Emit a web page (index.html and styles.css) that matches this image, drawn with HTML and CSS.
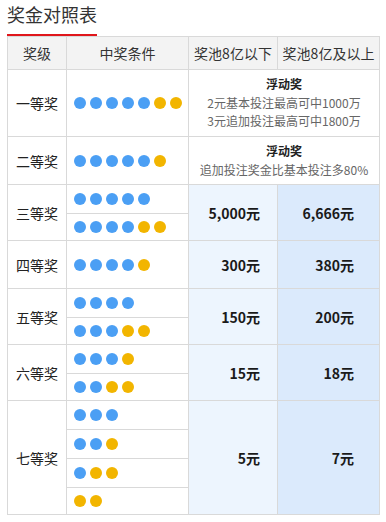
FILE: index.html
```html
<!DOCTYPE html>
<html lang="zh-CN">
<head>
<meta charset="utf-8">
<title>奖金对照表</title>
<link rel="stylesheet" href="styles.css">
</head>
<body>
<div class="wrap">
  <div class="title-bar"><h2 class="title">奖金对照表</h2></div>
  <table class="prize">
    <colgroup><col class="c1"><col class="c2"><col class="c3"><col class="c4"></colgroup>
    <thead>
      <tr><th>奖级</th><th>中奖条件</th><th>奖池8亿以下</th><th>奖池8亿及以上</th></tr>
    </thead>
    <tbody>
      <tr class="r-tall">
        <td class="lvl">一等奖</td>
        <td class="cond"><span class="b"></span><span class="b"></span><span class="b"></span><span class="b"></span><span class="b"></span><span class="y"></span><span class="y"></span></td>
        <td class="float" colspan="2"><strong>浮动奖</strong><br>2元基本投注最高可中1000万<br>3元追加投注最高可中1800万</td>
      </tr>
      <tr class="r-mid">
        <td class="lvl">二等奖</td>
        <td class="cond"><span class="b"></span><span class="b"></span><span class="b"></span><span class="b"></span><span class="b"></span><span class="y"></span></td>
        <td class="float" colspan="2"><strong>浮动奖</strong><br>追加投注奖金比基本投注多80%</td>
      </tr>

      <tr class="r-sub">
        <td class="lvl" rowspan="2">三等奖</td>
        <td class="cond"><span class="b"></span><span class="b"></span><span class="b"></span><span class="b"></span><span class="b"></span></td>
        <td class="amt a1" rowspan="2">5,000元</td>
        <td class="amt a2" rowspan="2">6,666元</td>
      </tr>
      <tr class="r-last">
        <td class="cond"><span class="b"></span><span class="b"></span><span class="b"></span><span class="b"></span><span class="y"></span><span class="y"></span></td>
      </tr>

      <tr class="r-mid">
        <td class="lvl">四等奖</td>
        <td class="cond"><span class="b"></span><span class="b"></span><span class="b"></span><span class="b"></span><span class="y"></span></td>
        <td class="amt a1">300元</td>
        <td class="amt a2">380元</td>
      </tr>

      <tr class="r-sub">
        <td class="lvl" rowspan="2">五等奖</td>
        <td class="cond"><span class="b"></span><span class="b"></span><span class="b"></span><span class="b"></span></td>
        <td class="amt a1" rowspan="2">150元</td>
        <td class="amt a2" rowspan="2">200元</td>
      </tr>
      <tr class="r-last">
        <td class="cond"><span class="b"></span><span class="b"></span><span class="b"></span><span class="y"></span><span class="y"></span></td>
      </tr>

      <tr class="r-sub">
        <td class="lvl" rowspan="2">六等奖</td>
        <td class="cond"><span class="b"></span><span class="b"></span><span class="b"></span><span class="y"></span></td>
        <td class="amt a1" rowspan="2">15元</td>
        <td class="amt a2" rowspan="2">18元</td>
      </tr>
      <tr class="r-last">
        <td class="cond"><span class="b"></span><span class="b"></span><span class="y"></span><span class="y"></span></td>
      </tr>

      <tr class="r-sub">
        <td class="lvl" rowspan="4">七等奖</td>
        <td class="cond"><span class="b"></span><span class="b"></span><span class="b"></span></td>
        <td class="amt a1" rowspan="4">5元</td>
        <td class="amt a2" rowspan="4">7元</td>
      </tr>
      <tr class="r-sub">
        <td class="cond"><span class="b"></span><span class="b"></span><span class="y"></span></td>
      </tr>
      <tr class="r-sub">
        <td class="cond"><span class="b"></span><span class="y"></span><span class="y"></span></td>
      </tr>
      <tr class="r-last">
        <td class="cond"><span class="y"></span><span class="y"></span></td>
      </tr>
    </tbody>
  </table>
</div>
</body>
</html>
```
FILE: styles.css
```css
* { box-sizing: content-box; }
html, body { margin: 0; padding: 0; background: #fff; }
body {
  font-family: "Noto Sans CJK SC", "Noto Sans", sans-serif;
  color: #222;
}
.wrap { padding: 0 7px; }
.title-bar { display: flex; }
.title {
  margin: 0;
  font-size: 18px;
  font-weight: normal;
  line-height: 29px;
  color: #333;
  padding-bottom: 5px;
  border-bottom: 2px solid #e0161b;
}
.prize {
  width: 372px;
  border-collapse: collapse;
  table-layout: fixed;
  font-size: 14px;
}
.c1 { width: 59px; }
.c2 { width: 122px; }
.c3 { width: 89px; }
.c4 { width: 102px; }
.prize th, .prize td {
  border: 1px solid #d9d9d9;
  padding: 0;
}
.prize th {
  height: 32px;
  background: #f3f3f3;
  font-weight: normal;
  color: #333;
  text-align: center;
}
.lvl { text-align: center; color: #222; }
.cond { padding-left: 7px !important; line-height: 0; }
.cond span {
  display: inline-block;
  width: 12px;
  height: 12px;
  border-radius: 50%;
  margin-right: 4px;
  vertical-align: middle;
}
.cond .b { background: #4b9ff4; }
.cond .y { background: #f2b500; }
.r-tall td { height: 66px; }
.r-mid td { height: 47px; }
.r-sub .cond { height: 28px; }
.r-last .cond { height: 26px; }
.float {
  text-align: center;
  font-size: 12px;
  line-height: 18.5px;
  color: #666;
  background: #fff;
}
.float strong { color: #222; font-weight: bold; }
.amt {
  text-align: right;
  font-weight: bold;
  color: #1a1a1a;
}
.a1 { background: #edf5fe; padding-right: 17px !important; }
.a2 { background: #dbeafc; padding-right: 25px !important; }
```
